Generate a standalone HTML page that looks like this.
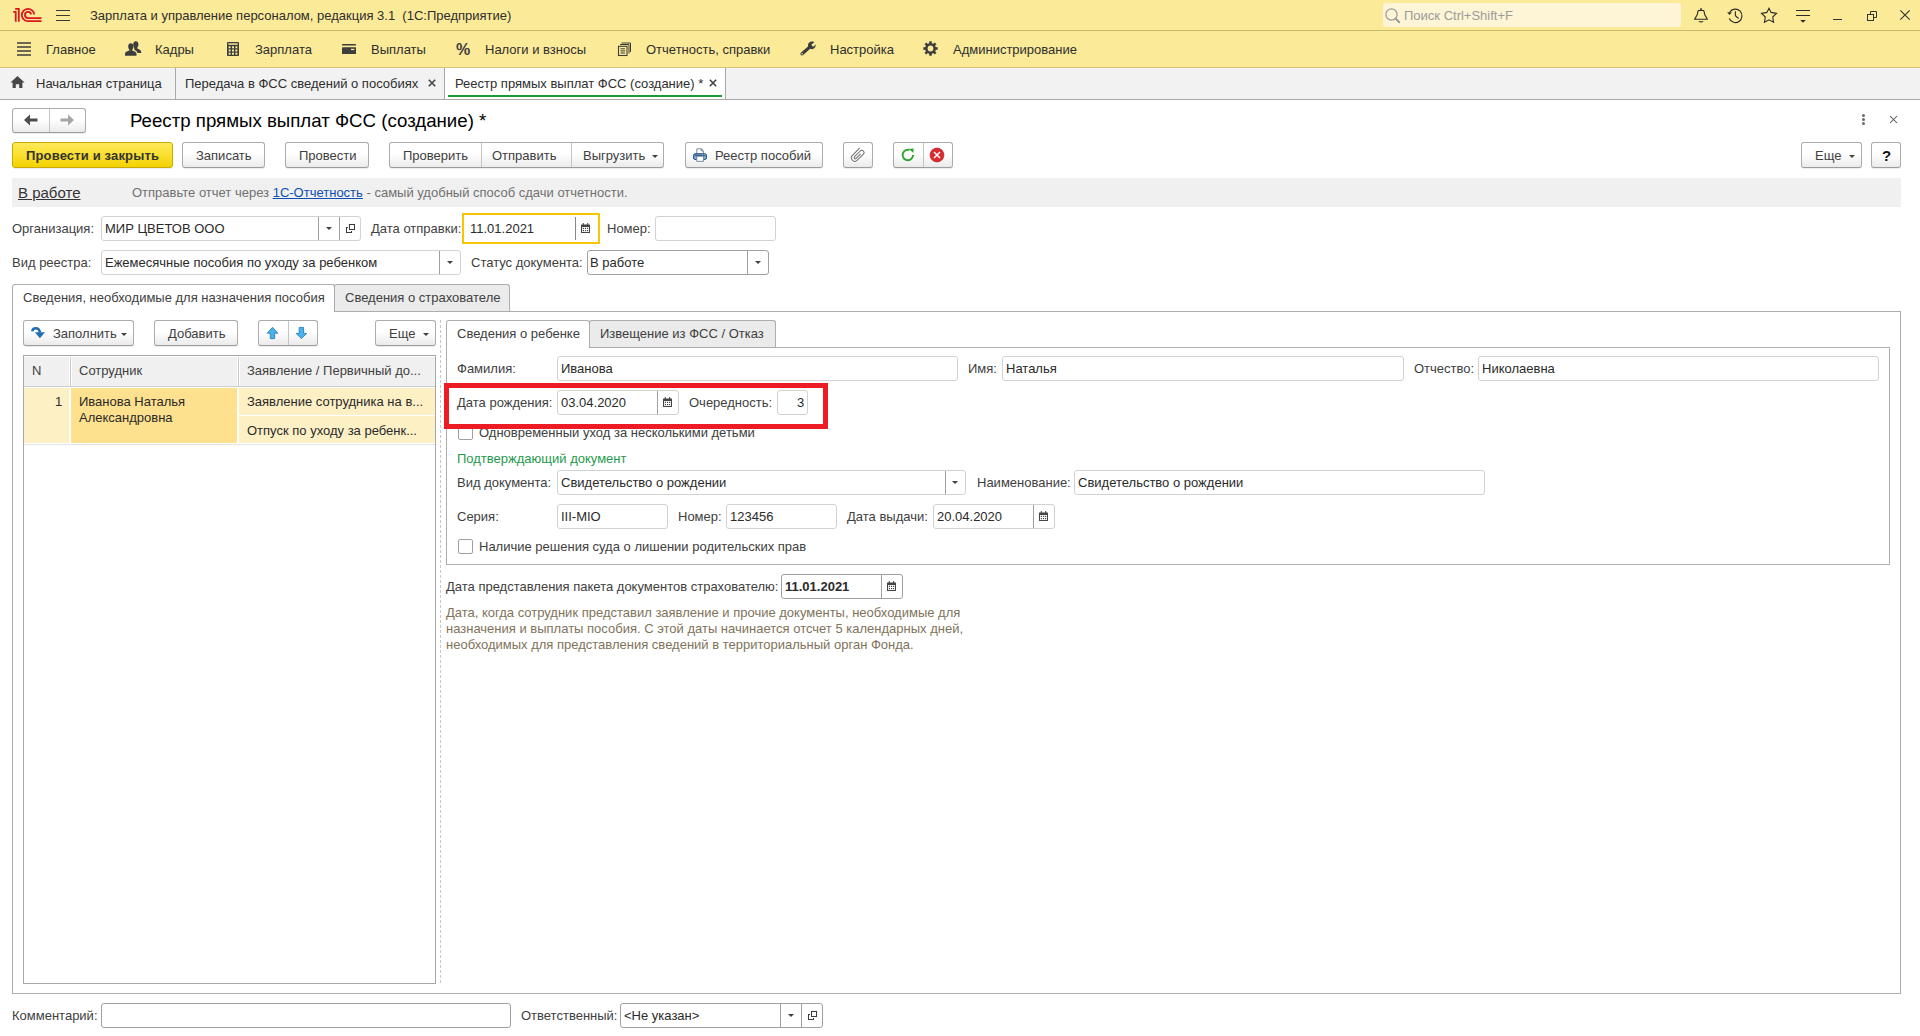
<!DOCTYPE html>
<html><head><meta charset="utf-8">
<style>
html,body{margin:0;padding:0;width:1920px;height:1036px;overflow:hidden;background:#fff;}
body{position:relative;font-family:"Liberation Sans",sans-serif;font-size:13px;color:#404040;}
.a{position:absolute;}
.t{position:absolute;white-space:nowrap;font-size:13px;line-height:15px;height:15px;}
.btn{position:absolute;box-sizing:border-box;border:1px solid #acacac;border-bottom-color:#9c9c9c;border-radius:3px;background:linear-gradient(#ffffff 0%,#ffffff 45%,#ebebeb 100%);box-shadow:0 1px 0 rgba(0,0,0,.07);}
.sep{position:absolute;top:0;bottom:0;width:1px;background:#c4c4c4;}
.fld{position:absolute;box-sizing:border-box;border:1px solid #d2d2d2;border-radius:3px;background:#fff;}
.fsep{position:absolute;top:0;bottom:0;width:1px;background:#9f9f9f;}
.dd{position:absolute;width:0;height:0;border-left:3px solid transparent;border-right:3px solid transparent;border-top:3px solid #404040;}
svg{position:absolute;overflow:visible;}
</style></head><body>

<!-- ===== Title bar ===== -->
<div class="a" style="left:0;top:0;width:1920px;height:67px;background:#fbea98;"></div>
<div class="a" style="left:0;top:30px;width:1920px;height:1px;background:#c9b96c;"></div>
<div class="a" style="left:0;top:67px;width:1920px;height:1px;background:#d3c27a;"></div>

<!-- 1C logo -->
<svg style="left:0;top:0" width="50" height="30" viewBox="0 0 50 30">
  <path d="M13.2 11.85 H15.75 V21.8" fill="none" stroke="#dc151d" stroke-width="1.75"/>
  <path d="M15.2 8.8 H18.8 V21.8" fill="none" stroke="#dc151d" stroke-width="1.75"/>
  <path d="M34.2 14.5 A6.2 6.2 0 1 0 28 21.2 H41.5" fill="none" stroke="#dc151d" stroke-width="1.75"/>
  <path d="M31.1 14.5 A3.1 3.1 0 1 0 28 18.1 H41.5" fill="none" stroke="#dc151d" stroke-width="1.75"/>
</svg>
<!-- hamburger -->
<div class="a" style="left:56px;top:10px;width:14px;height:1px;background:#3a3a3a;"></div>
<div class="a" style="left:56px;top:15px;width:14px;height:1px;background:#3a3a3a;"></div>
<div class="a" style="left:56px;top:20px;width:14px;height:1px;background:#3a3a3a;"></div>
<div class="t" style="left:90px;top:8px;color:#2e2e2e;">Зарплата и управление персоналом, редакция 3.1&nbsp; (1С:Предприятие)</div>


<!-- search -->
<div class="a" style="left:1383px;top:3px;width:298px;height:24px;background:#fdf5d5;border-radius:3px;"></div>
<svg style="left:1385px;top:8px" width="16" height="16" viewBox="0 0 16 16">
  <circle cx="6.5" cy="6.5" r="5.6" fill="none" stroke="#9a9a9a" stroke-width="1.2"/>
  <path d="M10.5 10.5 L14.2 14.2" stroke="#9a9a9a" stroke-width="2" stroke-linecap="round"/>
</svg>
<div class="t" style="left:1404px;top:8px;color:#9b9b9b;">Поиск Ctrl+Shift+F</div>
<!-- right icons -->
<svg style="left:0;top:0" width="1920" height="40" viewBox="0 0 1920 40">
  <path d="M1694.6 19.2 H1707.4 L1704.8 14.8 C1704.2 13.8 1704.5 10.8 1703.6 10.6 L1701 10.2 L1698.4 10.6 C1697.5 10.8 1697.8 13.8 1697.2 14.8 Z" fill="none" stroke="#2b2b2b" stroke-width="1.15" stroke-linejoin="round"/>
  <rect x="1700.3" y="8.2" width="1.4" height="2" fill="#2b2b2b"/>
  <path d="M1698.2 21.2 H1703.8 Q1701 23.6 1698.2 21.2 Z" fill="#2b2b2b"/>
  <path d="M1729.2 18.6 A6.7 6.7 0 1 0 1729.9 11.9" fill="none" stroke="#2b2b2b" stroke-width="1.15"/>
  <path d="M1727.1 12.3 H1731.9 L1729.5 15 Z" fill="#2b2b2b"/>
  <path d="M1735.4 11.2 V15.7 L1738.6 18.5" fill="none" stroke="#2b2b2b" stroke-width="1.1"/>
  <path d="M1769 8.2 L1771.1 12.4 L1776.5 13.4 L1772.7 17 L1773.6 22.3 L1769 19.8 L1764.4 22.3 L1765.3 17 L1761.5 13.4 L1766.9 12.4 Z" fill="none" stroke="#2b2b2b" stroke-width="1.1" stroke-linejoin="miter"/>
  <path d="M1796 10.5 H1810 M1796 15.5 H1810" stroke="#2b2b2b" stroke-width="1.15"/>
  <path d="M1800.2 20 H1805.8 L1803 22.8 Z" fill="#2b2b2b"/>
</svg>
<div class="a" style="left:1833px;top:19px;width:9px;height:1px;background:#333;"></div>
<svg style="left:1867px;top:11px" width="10" height="10" viewBox="0 0 10 10">
  <rect x="0.5" y="3.5" width="6" height="6" fill="none" stroke="#333" stroke-width="1"/>
  <path d="M3.5 3.5 V0.5 H9.5 V6.5 H6.5" fill="none" stroke="#333" stroke-width="1"/>
</svg>
<svg style="left:1900px;top:10px" width="10" height="10" viewBox="0 0 10 10">
  <path d="M0.3 0.3 L9.7 9.7 M9.7 0.3 L0.3 9.7" stroke="#333" stroke-width="1.1"/>
</svg>

<!-- ===== Sections panel ===== -->
<svg style="left:17px;top:42px" width="14" height="14" viewBox="0 0 14 14">
  <path d="M0 1 H14 M0 5 H14 M0 9 H14 M0 13 H14" stroke="#3d3d3d" stroke-width="1.6"/>
</svg>
<div class="t" style="left:46px;top:42px;color:#2e2e2e;">Главное</div>
<svg style="left:125px;top:41px" width="17" height="15" viewBox="0 0 17 15">
  <path d="M10.8 0.2 C12.9 0.2 13.6 2 13.4 3.8 C13.3 5 12.9 6.1 12.2 6.7 L12.3 7.6 C13.6 8.2 16.2 8.9 16.2 11 V12 H12.5 C12.1 10.2 10.6 9.6 9.5 9 L9.2 7 C8.7 6.3 8.4 5.2 8.2 3.8 C8 2 8.8 0.2 10.8 0.2 Z" fill="#3d3d3d"/>
  <path d="M5.8 2.2 C7.9 2.2 8.6 4 8.4 5.8 C8.3 7 7.9 8.1 7.2 8.7 L7.3 9.6 C8.8 10.2 11.5 10.9 11.5 13.1 V14.8 H0 V13.1 C0 10.9 2.7 10.2 4.3 9.6 L4.4 8.7 C3.7 8.1 3.3 7 3.2 5.8 C3 4 3.7 2.2 5.8 2.2 Z" fill="#3d3d3d"/>
</svg>
<div class="t" style="left:155px;top:42px;color:#2e2e2e;">Кадры</div>
<svg style="left:227px;top:42px" width="12" height="14" viewBox="0 0 12 14">
  <rect x="0" y="0" width="12" height="14" rx="0.8" fill="#3d3d3d"/>
  <rect x="1.3" y="1.3" width="9.4" height="1.5" fill="#fbea98"/>
  <g fill="#fbea98">
    <rect x="1.6" y="4.3" width="2" height="2"/><rect x="5" y="4.3" width="2" height="2"/><rect x="8.4" y="4.3" width="2" height="2"/>
    <rect x="1.6" y="7.5" width="2" height="2"/><rect x="5" y="7.5" width="2" height="2"/><rect x="8.4" y="7.5" width="2" height="2"/>
    <rect x="1.6" y="10.7" width="2" height="2"/><rect x="5" y="10.7" width="2" height="2"/><rect x="8.4" y="10.7" width="2" height="2"/>
  </g>
</svg>
<div class="t" style="left:255px;top:42px;color:#2e2e2e;">Зарплата</div>
<svg style="left:342px;top:44px" width="14" height="10" viewBox="0 0 14 10">
  <rect x="0" y="0" width="14" height="1.6" rx="0.5" fill="#3d3d3d"/>
  <rect x="0" y="3.3" width="14" height="6.7" rx="0.6" fill="#3d3d3d"/>
  <rect x="9" y="4.8" width="3.3" height="1.3" fill="#fbea98"/>
</svg>
<div class="t" style="left:371px;top:42px;color:#2e2e2e;">Выплаты</div>
<div class="t" style="left:456px;top:42px;font-size:16px;font-weight:bold;color:#3d3d3d;">%</div>
<div class="t" style="left:485px;top:42px;color:#2e2e2e;">Налоги и взносы</div>
<svg style="left:618px;top:42px" width="13" height="14" viewBox="0 0 13 14">
  <path d="M3.5 1 H12.5 V10" fill="none" stroke="#3d3d3d" stroke-width="1"/>
  <path d="M2 2.5 H11 V11.5" fill="none" stroke="#3d3d3d" stroke-width="1"/>
  <rect x="0.5" y="4.3" width="8.5" height="9.2" fill="none" stroke="#3d3d3d" stroke-width="1.1"/>
  <path d="M2.5 6.8 H7 M2.5 8.9 H7 M2.5 11 H7" stroke="#3d3d3d" stroke-width="1"/>
</svg>
<div class="t" style="left:646px;top:42px;color:#2e2e2e;">Отчетность, справки</div>
<svg style="left:800px;top:41px" width="16" height="15" viewBox="0 0 16 15">
  <path d="M10.5 0.8 C12.5 0.2 14.3 1.3 14.3 1.3 L11.5 3.6 L12.2 5.2 L14 5.5 L15.6 3.2 C15.6 3.2 16.2 6.2 13.8 7.6 C12.5 8.4 11.2 8.2 10.2 7.8 L3.2 14 C2.4 14.7 1 14.6 0.6 13.7 C0.2 13 0.4 12.1 1.1 11.5 L8 5.5 C7.6 3.5 8.6 1.4 10.5 0.8 Z" fill="#3d3d3d"/>
  <circle cx="2.1" cy="12.8" r="0.8" fill="#fbea98"/>
</svg>
<div class="t" style="left:830px;top:42px;color:#2e2e2e;">Настройка</div>
<svg style="left:923px;top:41px" width="15" height="15" viewBox="0 0 15 15">
  <g transform="translate(7.5 7.5)" fill="#3d3d3d">
    <rect x="-1.3" y="-7.2" width="2.6" height="14.4"/>
    <rect x="-1.3" y="-7.2" width="2.6" height="14.4" transform="rotate(45)"/>
    <rect x="-1.3" y="-7.2" width="2.6" height="14.4" transform="rotate(90)"/>
    <rect x="-1.3" y="-7.2" width="2.6" height="14.4" transform="rotate(135)"/>
    <circle r="5.4"/>
  </g>
  <circle cx="7.5" cy="7.5" r="2.9" fill="#fbea98"/>
</svg>
<div class="t" style="left:953px;top:42px;color:#2e2e2e;">Администрирование</div>

<!-- ===== Open windows tab bar ===== -->
<div class="a" style="left:0;top:68px;width:1920px;height:31px;background:#f2f2f2;"></div>
<div class="a" style="left:0;top:99px;width:1920px;height:1px;background:#a8a8a8;"></div>
<div class="a" style="left:175px;top:68px;width:1px;height:31px;background:#a8a8a8;"></div>
<div class="a" style="left:444px;top:68px;width:1px;height:31px;background:#a8a8a8;"></div>
<div class="a" style="left:445px;top:68px;width:280px;height:31px;background:#fff;"></div>
<div class="a" style="left:725px;top:68px;width:1px;height:31px;background:#a8a8a8;"></div>
<div class="a" style="left:448px;top:95px;width:274px;height:2px;background:#1a9a3a;"></div>
<svg style="left:10px;top:76px" width="15" height="12" viewBox="0 0 15 12">
  <path d="M7.5 0 L14.6 6.6 H12.4 V12 H9.2 V8.3 H5.8 V12 H2.6 V6.6 H0.4 Z" fill="#474747"/>
</svg>
<div class="t" style="left:36px;top:76px;color:#2e2e2e;">Начальная страница</div>
<div class="t" style="left:185px;top:76px;color:#2e2e2e;">Передача в ФСС сведений о пособиях</div>
<svg style="left:428px;top:79px" width="8" height="8" viewBox="0 0 8 8"><path d="M0.8 0.8 L7.2 7.2 M7.2 0.8 L0.8 7.2" stroke="#444" stroke-width="1.6"/></svg>
<div class="t" style="left:455px;top:76px;color:#2e2e2e;">Реестр прямых выплат ФСС (создание) *</div>
<svg style="left:709px;top:79px" width="8" height="8" viewBox="0 0 8 8"><path d="M0.8 0.8 L7.2 7.2 M7.2 0.8 L0.8 7.2" stroke="#444" stroke-width="1.6"/></svg>


<!-- ===== Form header ===== -->
<div class="btn" style="left:12px;top:108px;width:74px;height:25px;"><div class="sep" style="left:36px;"></div></div>
<svg style="left:24px;top:114px" width="14" height="12" viewBox="0 0 14 12"><path d="M0 6 L6 0.5 V4.6 H13.5 V7.4 H6 V11.5 Z" fill="#4d4d4d"/></svg>
<svg style="left:60px;top:114px" width="14" height="12" viewBox="0 0 14 12"><path d="M14 6 L8 0.5 V4.6 H0.5 V7.4 H8 V11.5 Z" fill="#a6a6a6"/></svg>
<div class="t" style="left:130px;top:110px;font-size:18.67px;line-height:21px;height:21px;color:#000;">Реестр прямых выплат ФСС (создание) *</div>
<div class="a" style="left:1862px;top:114px;width:3px;height:3px;border-radius:2px;background:#6a6a6a;"></div>
<div class="a" style="left:1862px;top:118px;width:3px;height:3px;border-radius:2px;background:#6a6a6a;"></div>
<div class="a" style="left:1862px;top:122px;width:3px;height:3px;border-radius:2px;background:#6a6a6a;"></div>
<svg style="left:1890px;top:116px" width="7" height="7" viewBox="0 0 7 7"><path d="M0 0 L7 7 M7 0 L0 7" stroke="#505050" stroke-width="1.05"/></svg>

<!-- command bar -->
<div class="btn" style="left:12px;top:142px;width:161px;height:26px;border-color:#c9a900;background:linear-gradient(#ffe95a 0%,#fbe030 50%,#f3d200 100%);"></div>
<div class="t" style="left:26px;top:148px;font-weight:bold;color:#333;letter-spacing:0.15px;">Провести и закрыть</div>
<div class="btn" style="left:182px;top:142px;width:83px;height:26px;"></div>
<div class="t" style="left:196px;top:148px;">Записать</div>
<div class="btn" style="left:285px;top:142px;width:84px;height:26px;"></div>
<div class="t" style="left:299px;top:148px;">Провести</div>
<div class="btn" style="left:389px;top:142px;width:275px;height:26px;"><div class="sep" style="left:91px;"></div><div class="sep" style="left:181px;"></div></div>
<div class="t" style="left:403px;top:148px;">Проверить</div>
<div class="t" style="left:492px;top:148px;">Отправить</div>
<div class="t" style="left:583px;top:148px;">Выгрузить</div>
<div class="dd" style="left:652px;top:155px;"></div>
<div class="btn" style="left:685px;top:142px;width:138px;height:26px;"></div>
<svg style="left:680px;top:140px" width="40" height="30" viewBox="680 140 40 30">
  <defs><linearGradient id="pg" x1="0" y1="0" x2="0" y2="1"><stop offset="0" stop-color="#5f8fc4"/><stop offset="1" stop-color="#9dbde3"/></linearGradient></defs>
  <path d="M696.8 154 V148.8 H701.5 L703.3 151 V154" fill="#fff" stroke="#6a7f96" stroke-width="0.9"/>
  <path d="M701.3 148.8 V150.9 H703.3" fill="none" stroke="#6a7f96" stroke-width="0.9"/>
  <rect x="693.6" y="153.8" width="12.8" height="5.6" rx="1.4" fill="url(#pg)" stroke="#1f4e79" stroke-width="1"/>
  <path d="M695 155.5 H705" stroke="#2a4f74" stroke-width="0.8"/>
  <circle cx="702.5" cy="154.6" r="0.45" fill="#fff"/><circle cx="704.5" cy="154.6" r="0.45" fill="#fff"/>
  <rect x="696.8" y="156.2" width="6.6" height="5.1" fill="#fff" stroke="#6a7f96" stroke-width="0.9"/>
</svg>
<div class="t" style="left:715px;top:148px;">Реестр пособий</div>
<div class="btn" style="left:843px;top:142px;width:30px;height:26px;"></div>
<svg style="left:840px;top:140px" width="40" height="30" viewBox="840 140 40 30">
  <g transform="translate(858 154.5) rotate(45)">
    <path d="M-3.3 -5.6 V4.6 A3.4 3.4 0 0 0 3.5 4.6 V-4.1 A2.2 2.2 0 0 0 -0.9 -4.1 V4.0 A1.15 1.15 0 0 0 1.4 4.0 V-2.3" fill="none" stroke="#686868" stroke-width="0.95"/>
  </g>
</svg>
<div class="btn" style="left:893px;top:142px;width:60px;height:26px;"><div class="sep" style="left:29px;"></div></div>
<svg style="left:890px;top:140px" width="60" height="30" viewBox="890 140 60 30">
  <path d="M909.5 149.8 H907.8 A5.2 5.2 0 1 0 913 154.9" fill="none" stroke="#2aa52a" stroke-width="1.9"/>
  <path d="M909 148.9 L913.6 148.6 L913.3 152.9 Z" fill="#2aa52a"/>
  <circle cx="937" cy="155" r="6.9" fill="#dc2b30" stroke="#b81f25" stroke-width="0.8"/>
  <path d="M934 152 L940 158 M940 152 L934 158" stroke="#fff" stroke-width="1.5"/>
</svg>
<div class="btn" style="left:1801px;top:142px;width:61px;height:26px;"></div>
<div class="t" style="left:1815px;top:148px;">Еще</div>
<div class="dd" style="left:1849px;top:155px;"></div>
<div class="btn" style="left:1871px;top:142px;width:30px;height:26px;"></div>
<div class="t" style="left:1882px;top:147px;color:#111;font-size:15px;font-weight:bold;line-height:17px;height:17px;">?</div>

<!-- info bar -->
<div class="a" style="left:12px;top:178px;width:1889px;height:29px;background:#f0f0f0;"></div>
<div class="t" style="left:18px;top:184px;font-size:15px;line-height:17px;height:17px;color:#333;text-decoration:underline;">В работе</div>
<div class="t" style="left:132px;top:185px;color:#707070;">Отправьте отчет через <span style="color:#0f4fb5;text-decoration:underline;">1С-Отчетность</span> - самый удобный способ сдачи отчетности.</div>

<!-- header fields -->
<div class="t" style="left:12px;top:221px;">Организация:</div>
<div class="fld" style="left:101px;top:216px;width:260px;height:25px;"><div class="fsep" style="left:216px;"></div><div class="fsep" style="left:237px;"></div></div>
<div class="t" style="left:105px;top:221px;color:#2a2a2a;">МИР ЦВЕТОВ ООО</div>
<div class="dd" style="left:326px;top:227px;"></div>
<svg style="left:340px;top:220px" width="20" height="16" viewBox="340 220 20 16"><rect x="349.5" y="224.5" width="5" height="5" fill="none" stroke="#3c3c3c" stroke-width="1.05"/><path d="M348 227.5 H346.5 V232.5 H351.5 V231" fill="none" stroke="#3c3c3c" stroke-width="1.05"/></svg>
<div class="t" style="left:371px;top:221px;">Дата отправки:</div>
<div class="a" style="left:462px;top:213px;width:138px;height:31px;box-sizing:border-box;border:2px solid #f7c500;border-radius:1px;background:#fff;"></div>
<div class="a" style="left:575px;top:217px;width:1px;height:23px;background:#888;"></div>
<div class="t" style="left:470px;top:221px;color:#2a2a2a;">11.01.2021</div>
<svg style="left:581px;top:223px" width="9" height="10" viewBox="0 0 9 10">
  <rect x="0" y="1.5" width="9" height="8.5" rx="0.5" fill="#444"/>
  <rect x="1" y="4" width="7" height="5" fill="#fff"/>
  <rect x="1.8" y="0" width="1" height="2.5" fill="#444"/><rect x="6.2" y="0" width="1" height="2.5" fill="#444"/>
  <g fill="#444"><rect x="1.8" y="4.8" width="1.2" height="1.2"/><rect x="3.9" y="4.8" width="1.2" height="1.2"/><rect x="6" y="4.8" width="1.2" height="1.2"/><rect x="1.8" y="7" width="1.2" height="1.2"/><rect x="3.9" y="7" width="1.2" height="1.2"/><rect x="6" y="7" width="1.2" height="1.2"/></g>
</svg>
<div class="t" style="left:607px;top:221px;">Номер:</div>
<div class="fld" style="left:655px;top:216px;width:121px;height:25px;"></div>

<div class="t" style="left:12px;top:255px;">Вид реестра:</div>
<div class="fld" style="left:101px;top:250px;width:360px;height:25px;"><div class="fsep" style="left:337px;"></div></div>
<div class="t" style="left:105px;top:255px;color:#2a2a2a;">Ежемесячные пособия по уходу за ребенком</div>
<div class="dd" style="left:447px;top:261px;"></div>
<div class="t" style="left:471px;top:255px;">Статус документа:</div>
<div class="fld" style="left:587px;top:250px;width:182px;height:25px;border-color:#a0a0a0;"><div class="fsep" style="left:159px;"></div></div>
<div class="t" style="left:590px;top:255px;color:#2a2a2a;">В работе</div>
<div class="dd" style="left:755px;top:261px;"></div>


<!-- ===== Main tabs ===== -->
<div class="a" style="left:334px;top:284px;width:176px;height:27px;box-sizing:border-box;background:#ebebeb;border:1px solid #adadad;border-bottom:none;border-radius:3px 3px 0 0;"></div>
<div class="a" style="left:12px;top:311px;width:1889px;height:683px;box-sizing:border-box;border:1px solid #adadad;background:#fff;"></div>
<div class="a" style="left:12px;top:284px;width:323px;height:28px;box-sizing:border-box;background:#fff;border:1px solid #adadad;border-bottom:none;border-radius:3px 3px 0 0;"></div>
<div class="t" style="left:23px;top:290px;">Сведения, необходимые для назначения пособия</div>
<div class="t" style="left:345px;top:290px;">Сведения о страхователе</div>

<!-- left toolbar -->
<div class="btn" style="left:23px;top:320px;width:111px;height:26px;"></div>
<svg style="left:0;top:300px" width="60" height="50" viewBox="0 300 60 50">
  <path d="M32.3 331.3 C32.6 327.6 38.6 326.3 40.1 332.6" fill="none" stroke="#2270b0" stroke-width="2.6"/>
  <path d="M34.8 332.3 H45 L39.9 338.3 Z" fill="#2270b0"/>
</svg>
<div class="t" style="left:53px;top:326px;">Заполнить</div>
<div class="dd" style="left:121px;top:333px;"></div>
<div class="btn" style="left:154px;top:320px;width:84px;height:26px;"></div>
<div class="t" style="left:168px;top:326px;">Добавить</div>
<div class="btn" style="left:258px;top:320px;width:60px;height:26px;"><div class="sep" style="left:29px;"></div></div>
<svg style="left:0;top:300px" width="320" height="50" viewBox="0 300 320 50">
  <path d="M272.5 327.3 L277.7 333.2 H274.6 V338.6 H270.3 V333.2 H267.3 Z" fill="#4ab3ef" stroke="#2b80ba" stroke-width="0.9" stroke-linejoin="miter"/>
  <path d="M301.4 338.6 L306.7 333.4 H303.6 V327.4 H299.2 V333.4 H296.2 Z" fill="#4ab3ef" stroke="#2b80ba" stroke-width="0.9" stroke-linejoin="miter"/>
</svg>
<div class="btn" style="left:375px;top:320px;width:61px;height:26px;"></div>
<div class="t" style="left:389px;top:326px;">Еще</div>
<div class="dd" style="left:423px;top:333px;"></div>

<!-- table -->
<div class="a" style="left:23px;top:355px;width:413px;height:629px;box-sizing:border-box;border:1px solid #a8a8a8;background:#fff;"></div>
<div class="a" style="left:24px;top:357px;width:411px;height:29px;background:#f0f0f0;"></div>
<div class="a" style="left:69px;top:357px;width:3px;height:29px;background:#fff;"></div>
<div class="a" style="left:70px;top:357px;width:1px;height:29px;background:#c9c9c9;"></div>
<div class="a" style="left:237px;top:357px;width:3px;height:29px;background:#fff;"></div>
<div class="a" style="left:238px;top:357px;width:1px;height:29px;background:#c9c9c9;"></div>
<div class="a" style="left:24px;top:386px;width:411px;height:1px;background:#cfcfcf;"></div>
<div class="a" style="left:24px;top:388px;width:45px;height:55px;background:#fdf0c5;"></div>
<div class="a" style="left:71px;top:388px;width:166px;height:55px;background:#fde18e;"></div>
<div class="a" style="left:239px;top:388px;width:196px;height:27px;background:#fdf0c5;"></div>
<div class="a" style="left:239px;top:416px;width:196px;height:27px;background:#fdf0c5;"></div>
<div class="a" style="left:24px;top:444px;width:411px;height:1px;background:#e3e3e3;"></div>
<div class="t" style="left:32px;top:363px;">N</div>
<div class="t" style="left:79px;top:363px;">Сотрудник</div>
<div class="t" style="left:247px;top:363px;">Заявление / Первичный до...</div>
<div class="t" style="left:55px;top:394px;color:#2a2a2a;">1</div>
<div class="t" style="left:79px;top:394px;color:#2a2a2a;">Иванова Наталья</div>
<div class="t" style="left:79px;top:410px;color:#2a2a2a;">Александровна</div>
<div class="t" style="left:247px;top:394px;color:#2a2a2a;">Заявление сотрудника на в...</div>
<div class="t" style="left:247px;top:423px;color:#2a2a2a;">Отпуск по уходу за ребенк...</div>

<!-- splitter -->
<div class="a" style="left:440px;top:320px;width:1px;height:664px;background:repeating-linear-gradient(#c8c8c8 0 3px,transparent 3px 5px);"></div>

<!-- child tabs -->
<div class="a" style="left:589px;top:320px;width:187px;height:27px;box-sizing:border-box;background:#ebebeb;border:1px solid #adadad;border-bottom:none;border-radius:3px 3px 0 0;"></div>
<div class="a" style="left:446px;top:347px;width:1444px;height:218px;box-sizing:border-box;border:1px solid #adadad;background:#fff;"></div>
<div class="a" style="left:446px;top:320px;width:144px;height:28px;box-sizing:border-box;background:#fff;border:1px solid #adadad;border-bottom:none;border-radius:3px 3px 0 0;"></div>
<div class="t" style="left:457px;top:326px;">Сведения о ребенке</div>
<div class="t" style="left:600px;top:326px;">Извещение из ФСС / Отказ</div>

<div class="t" style="left:457px;top:361px;">Фамилия:</div>
<div class="fld" style="left:557px;top:356px;width:401px;height:25px;"></div>
<div class="t" style="left:561px;top:361px;color:#2a2a2a;">Иванова</div>
<div class="t" style="left:968px;top:361px;">Имя:</div>
<div class="fld" style="left:1002px;top:356px;width:402px;height:25px;"></div>
<div class="t" style="left:1006px;top:361px;color:#2a2a2a;">Наталья</div>
<div class="t" style="left:1414px;top:361px;">Отчество:</div>
<div class="fld" style="left:1478px;top:356px;width:401px;height:25px;"></div>
<div class="t" style="left:1482px;top:361px;color:#2a2a2a;">Николаевна</div>

<div class="t" style="left:457px;top:395px;">Дата рождения:</div>
<div class="fld" style="left:557px;top:390px;width:122px;height:25px;"><div class="fsep" style="left:99px;"></div></div>
<div class="t" style="left:561px;top:395px;color:#2a2a2a;">03.04.2020</div>
<svg style="left:663px;top:397px" width="9" height="10" viewBox="0 0 9 10">
  <rect x="0" y="1.5" width="9" height="8.5" rx="0.5" fill="#444"/>
  <rect x="1" y="4" width="7" height="5" fill="#fff"/>
  <rect x="1.8" y="0" width="1" height="2.5" fill="#444"/><rect x="6.2" y="0" width="1" height="2.5" fill="#444"/>
  <g fill="#444"><rect x="1.8" y="4.8" width="1.2" height="1.2"/><rect x="3.9" y="4.8" width="1.2" height="1.2"/><rect x="6" y="4.8" width="1.2" height="1.2"/><rect x="1.8" y="7" width="1.2" height="1.2"/><rect x="3.9" y="7" width="1.2" height="1.2"/><rect x="6" y="7" width="1.2" height="1.2"/></g>
</svg>
<div class="t" style="left:689px;top:395px;">Очередность:</div>
<div class="fld" style="left:777px;top:390px;width:31px;height:25px;"></div>
<div class="t" style="left:797px;top:395px;color:#2a2a2a;">3</div>

<div class="a" style="left:458px;top:425px;width:15px;height:15px;box-sizing:border-box;border:1px solid #a0a0a0;border-radius:2px;background:#fff;"></div>
<div class="t" style="left:479px;top:425px;">Одновременный уход за несколькими детьми</div>
<div class="t" style="left:457px;top:451px;color:#1f9a4d;">Подтверждающий документ</div>

<div class="t" style="left:457px;top:475px;">Вид документа:</div>
<div class="fld" style="left:557px;top:470px;width:409px;height:25px;"><div class="fsep" style="left:387px;"></div></div>
<div class="t" style="left:561px;top:475px;color:#2a2a2a;">Свидетельство о рождении</div>
<div class="dd" style="left:952px;top:481px;"></div>
<div class="t" style="left:977px;top:475px;">Наименование:</div>
<div class="fld" style="left:1074px;top:470px;width:411px;height:25px;"></div>
<div class="t" style="left:1078px;top:475px;color:#2a2a2a;">Свидетельство о рождении</div>

<div class="t" style="left:457px;top:509px;">Серия:</div>
<div class="fld" style="left:557px;top:504px;width:111px;height:25px;"></div>
<div class="t" style="left:561px;top:509px;color:#2a2a2a;">III-MIO</div>
<div class="t" style="left:678px;top:509px;">Номер:</div>
<div class="fld" style="left:726px;top:504px;width:111px;height:25px;"></div>
<div class="t" style="left:730px;top:509px;color:#2a2a2a;">123456</div>
<div class="t" style="left:847px;top:509px;">Дата выдачи:</div>
<div class="fld" style="left:933px;top:504px;width:122px;height:25px;"><div class="fsep" style="left:99px;"></div></div>
<div class="t" style="left:937px;top:509px;color:#2a2a2a;">20.04.2020</div>
<svg style="left:1039px;top:511px" width="9" height="10" viewBox="0 0 9 10">
  <rect x="0" y="1.5" width="9" height="8.5" rx="0.5" fill="#444"/>
  <rect x="1" y="4" width="7" height="5" fill="#fff"/>
  <rect x="1.8" y="0" width="1" height="2.5" fill="#444"/><rect x="6.2" y="0" width="1" height="2.5" fill="#444"/>
  <g fill="#444"><rect x="1.8" y="4.8" width="1.2" height="1.2"/><rect x="3.9" y="4.8" width="1.2" height="1.2"/><rect x="6" y="4.8" width="1.2" height="1.2"/><rect x="1.8" y="7" width="1.2" height="1.2"/><rect x="3.9" y="7" width="1.2" height="1.2"/><rect x="6" y="7" width="1.2" height="1.2"/></g>
</svg>

<div class="a" style="left:458px;top:539px;width:15px;height:15px;box-sizing:border-box;border:1px solid #a0a0a0;border-radius:2px;background:#fff;"></div>
<div class="t" style="left:479px;top:539px;">Наличие решения суда о лишении родительских прав</div>

<div class="t" style="left:446px;top:579px;">Дата представления пакета документов страхователю:</div>
<div class="fld" style="left:781px;top:574px;width:122px;height:25px;border-color:#a0a0a0;"><div class="fsep" style="left:99px;"></div></div>
<div class="t" style="left:785px;top:579px;color:#2a2a2a;font-weight:bold;">11.01.2021</div>
<svg style="left:887px;top:581px" width="9" height="10" viewBox="0 0 9 10">
  <rect x="0" y="1.5" width="9" height="8.5" rx="0.5" fill="#444"/>
  <rect x="1" y="4" width="7" height="5" fill="#fff"/>
  <rect x="1.8" y="0" width="1" height="2.5" fill="#444"/><rect x="6.2" y="0" width="1" height="2.5" fill="#444"/>
  <g fill="#444"><rect x="1.8" y="4.8" width="1.2" height="1.2"/><rect x="3.9" y="4.8" width="1.2" height="1.2"/><rect x="6" y="4.8" width="1.2" height="1.2"/><rect x="1.8" y="7" width="1.2" height="1.2"/><rect x="3.9" y="7" width="1.2" height="1.2"/><rect x="6" y="7" width="1.2" height="1.2"/></g>
</svg>
<div class="t" style="left:446px;top:605px;color:#80735a;">Дата, когда сотрудник представил заявление и прочие документы, необходимые для</div>
<div class="t" style="left:446px;top:621px;color:#80735a;">назначения и выплаты пособия. С этой даты начинается отсчет 5 календарных дней,</div>
<div class="t" style="left:446px;top:637px;color:#80735a;">необходимых для представления сведений в территориальный орган Фонда.</div>

<!-- red highlight -->
<div class="a" style="left:444px;top:383px;width:384px;height:46px;box-sizing:border-box;border:5px solid #ed1c24;"></div>

<!-- ===== Footer ===== -->
<div class="t" style="left:12px;top:1008px;">Комментарий:</div>
<div class="fld" style="left:101px;top:1003px;width:410px;height:25px;border-color:#a0a0a0;"></div>
<div class="t" style="left:521px;top:1008px;">Ответственный:</div>
<div class="fld" style="left:620px;top:1003px;width:203px;height:25px;border-color:#a0a0a0;"><div class="fsep" style="left:159px;"></div><div class="fsep" style="left:180px;"></div></div>
<div class="t" style="left:624px;top:1008px;color:#2a2a2a;">&lt;Не указан&gt;</div>
<div class="dd" style="left:788px;top:1014px;"></div>
<svg style="left:802px;top:1007px" width="20" height="16" viewBox="802 1007 20 16"><rect x="811.5" y="1011.5" width="5" height="5" fill="none" stroke="#3c3c3c" stroke-width="1.05"/><path d="M810 1014.5 H808.5 V1019.5 H813.5 V1018" fill="none" stroke="#3c3c3c" stroke-width="1.05"/></svg>

</body></html>
